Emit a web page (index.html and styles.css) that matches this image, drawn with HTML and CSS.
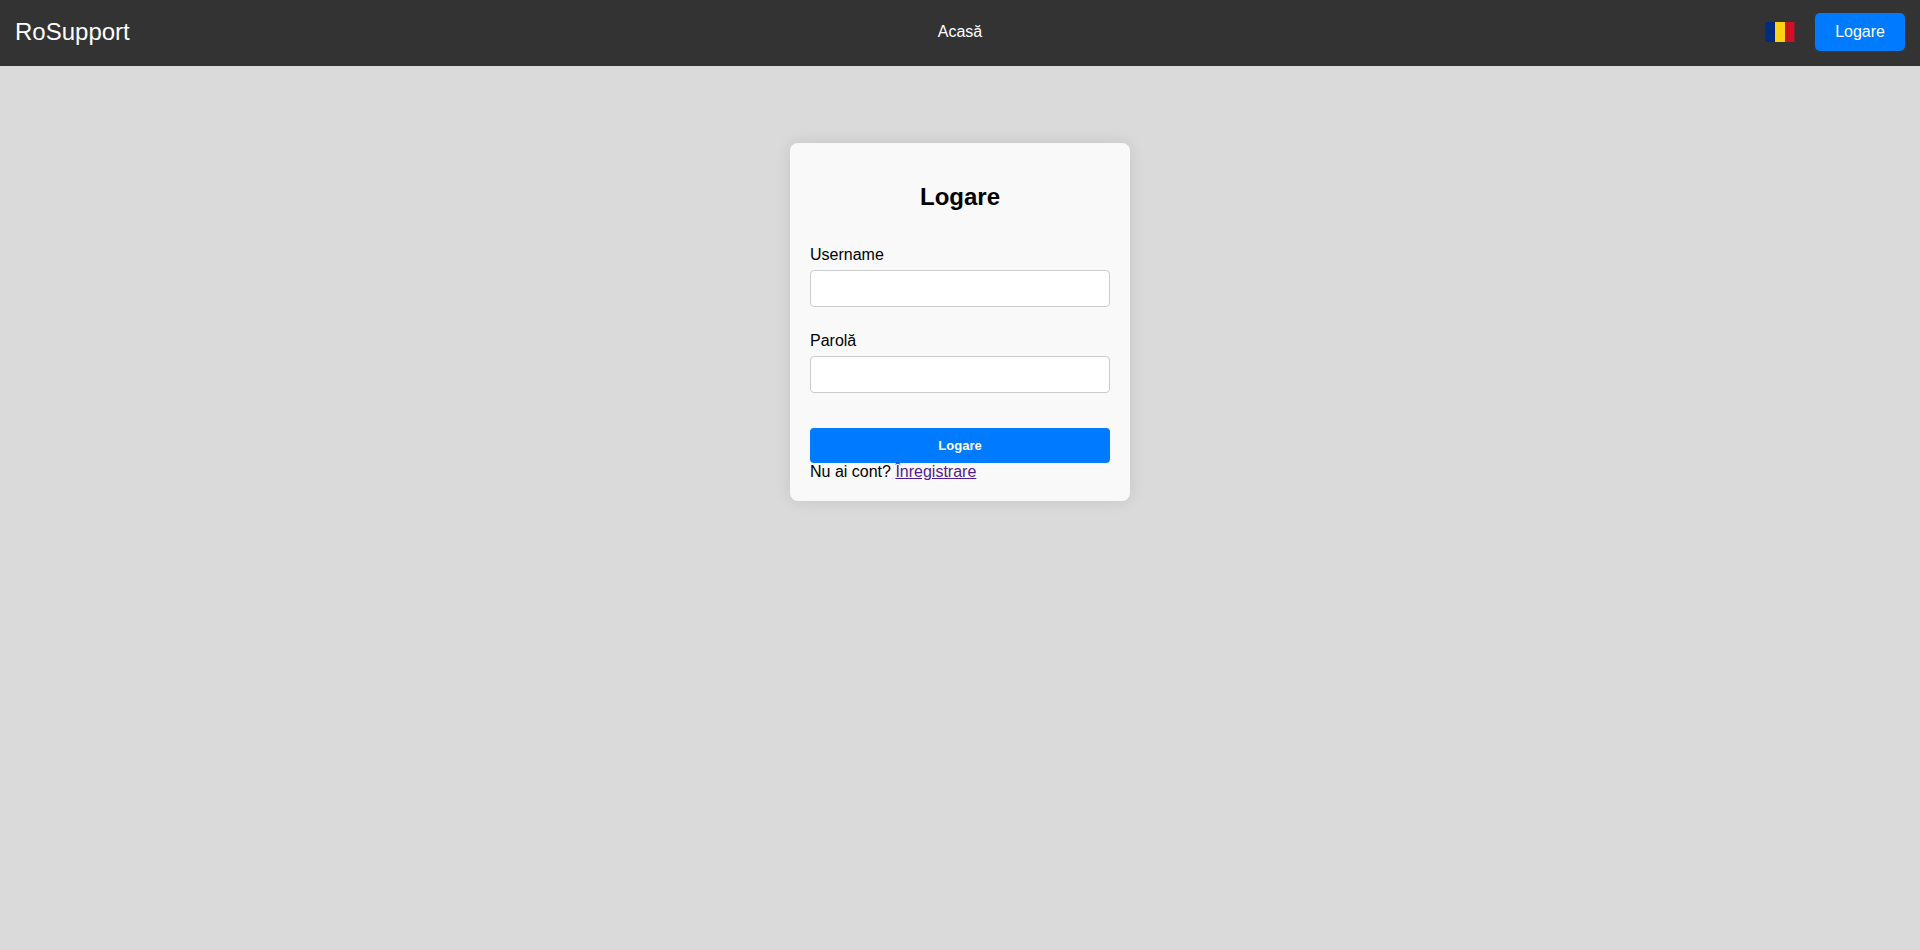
FILE: index.html
```
<!DOCTYPE html>
<html lang="ro">
<head>
<meta charset="utf-8">
<meta name="viewport" content="width=device-width, initial-scale=1">
<title>RoSupport - Logare</title>
<link rel="stylesheet" href="styles.css">
</head>
<body>
<header class="navbar">
  <a class="logo" href="#">RoSupport</a>
  <nav><a class="nav-link" href="#">Acasă</a></nav>
  <div class="nav-actions">
    <button class="language" type="button" aria-label="Română">
      <svg class="flag" viewBox="0 0 30 20" aria-hidden="true">
        <rect x="0.5" width="10" height="20" fill="#002b7f"/>
        <rect x="10" width="10" height="20" fill="#fcd116"/>
        <rect x="20" width="9.5" height="20" fill="#ce1126"/>
      </svg>
    </button>
    <a class="login-link" href="#">Logare</a>
  </div>
</header>
<main class="login-card">
  <h2 class="login-title">Logare</h2>
  <form class="login-form">
    <div class="field">
      <label for="username">Username</label>
      <input class="text-input" type="text" id="username" name="username">
    </div>
    <div class="field">
      <label for="password">Parolă</label>
      <input class="text-input" type="password" id="password" name="password">
    </div>
    <button class="submit" type="submit">Logare</button>
  </form>
  <div>Nu ai cont? <a class="register-link" href="#">Înregistrare</a></div>
</main>
</body>
</html>
```
FILE: styles.css
```
* {
  box-sizing: border-box;
}

body {
  min-height: 100vh;
  margin: 0;
  background: #dadada;
  color: #000;
  font-family: "Liberation Sans", Arial, sans-serif;
  font-size: 16px;
  line-height: 18px;
}

.navbar {
  display: grid;
  grid-template-columns: 1fr auto 1fr;
  align-items: center;
  padding: 13px 15px 15px;
  background: #333;
}

.logo,
.nav-link,
.login-link {
  color: #fff;
  text-decoration: none;
}

.logo {
  justify-self: start;
  font-size: 24px;
  line-height: 28px;
}

.nav-actions {
  display: flex;
  justify-content: flex-end;
  align-items: center;
  gap: 20px;
}

.language {
  padding: 0;
  border: 0;
  background: none;
  cursor: pointer;
}

.flag {
  display: block;
  width: 30px;
  height: 20px;
}

.login-link {
  padding: 10px 20px;
  border-radius: 5px;
  background: #007bff;
}

.login-card {
  width: 340px;
  max-width: 100%;
  margin: 77px auto 0;
  padding: 20px;
  border-radius: 8px;
  background: #f9f9f9;
  box-shadow: 0 0 15px rgba(0, 0, 0, 0.1);
}

.login-title {
  margin: 20px 0 36px;
  font-size: 24px;
  line-height: 27px;
  text-align: center;
}

.login-form,
.field {
  display: flex;
  flex-direction: column;
}

.field {
  gap: 6px;
  margin-bottom: 25px;
}

.text-input {
  width: 100%;
  height: 37px;
  padding: 10px;
  border: 1px solid #ccc;
  border-radius: 4px;
  background: #fff;
}

.submit {
  margin-top: 10px;
  padding: 10px;
  border: 0;
  border-radius: 4px;
  background: #007bff;
  color: #fff;
  font-family: inherit;
  font-size: 13px;
  font-weight: bold;
  line-height: 15px;
  cursor: pointer;
}

.register-link {
  color: #551a8b;
}
```
